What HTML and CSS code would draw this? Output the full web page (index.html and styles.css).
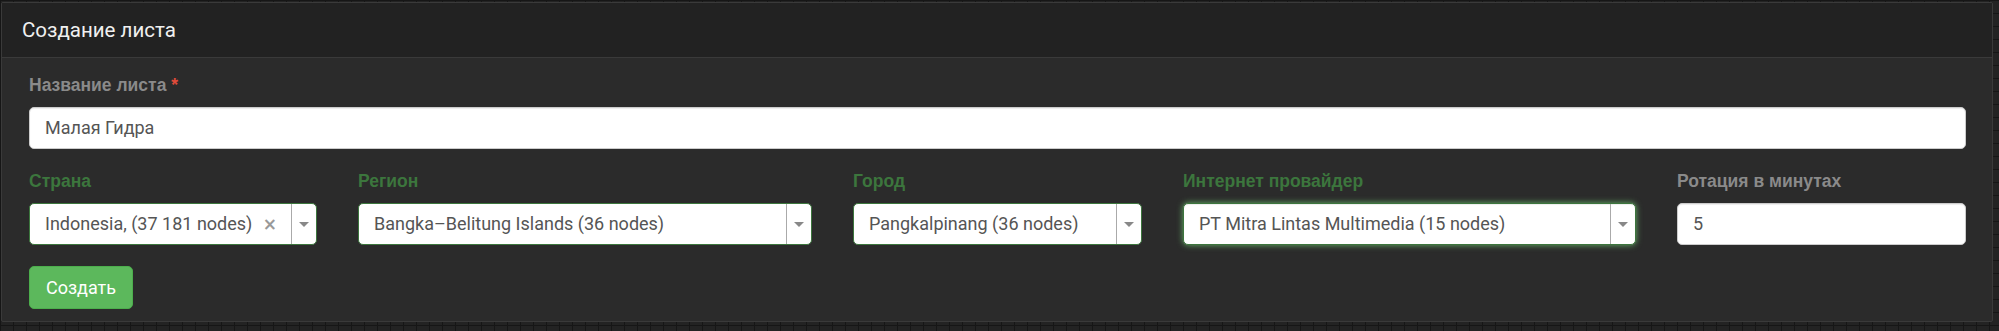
FILE: index.html
```html
<!DOCTYPE html>
<html lang="ru">
<head>
<meta charset="utf-8">
<title>Создание листа</title>
<link rel="stylesheet" href="styles.css">
</head>
<body>
<div class="panel">
  <div class="panel-heading">
    <h3 class="panel-title">Создание листа</h3>
  </div>
  <div class="panel-body">
    <div class="form-group">
      <label class="label">Название листа <span class="req">*</span></label>
      <div class="input">Малая Гидра</div>
    </div>
    <div class="filters">
      <div class="field">
        <label class="label success">Страна</label>
        <div class="select">
          <span class="select-text">Indonesia, (37 181 nodes)</span>
          <span class="clear">×</span>
          <span class="arrow"><span class="caret"></span></span>
        </div>
      </div>
      <div class="field">
        <label class="label success">Регион</label>
        <div class="select">
          <span class="select-text">Bangka–Belitung Islands (36 nodes)</span>
          <span class="arrow"><span class="caret"></span></span>
        </div>
      </div>
      <div class="field">
        <label class="label success">Город</label>
        <div class="select">
          <span class="select-text">Pangkalpinang (36 nodes)</span>
          <span class="arrow"><span class="caret"></span></span>
        </div>
      </div>
      <div class="field">
        <label class="label success">Интернет провайдер</label>
        <div class="select focus">
          <span class="select-text">PT Mitra Lintas Multimedia (15 nodes)</span>
          <span class="arrow"><span class="caret"></span></span>
        </div>
      </div>
      <div class="field">
        <label class="label">Ротация в минутах</label>
        <div class="input">5</div>
      </div>
    </div>
    <button class="btn">Создать</button>
  </div>
</div>
</body>
</html>
```
FILE: styles.css
```css
html, body {
  margin: 0;
  padding: 0;
}
body {
  width: 1999px;
  height: 331px;
  overflow: hidden;
  background-color: #232323;
  background-image:
    linear-gradient(to right, #161616 1px, transparent 1px),
    linear-gradient(to bottom, #161616 1px, transparent 1px);
  background-size: 13px 13px;
  font-family: Roboto, "Liberation Sans", Arial, sans-serif;
  font-size: 18px;
  line-height: 1.42857;
  color: #555;
}
.panel {
  margin: 2px 6px 0 1px;
  height: 320px;
  border: 1px solid #3a3a3a;
  border-radius: 2px;
  background: #2b2b2b;
  box-sizing: border-box;
}
.panel-heading {
  height: 55px;
  box-sizing: border-box;
  background: #222222;
  border-bottom: 1px solid #3a3a3a;
  padding: 0 20px;
  display: flex;
  align-items: center;
}
.panel-title {
  margin: 0;
  font-size: 20.5px;
  font-weight: 400;
  color: #f0f0f0;
  line-height: 1.1;
}
.panel-body {
  padding: 15px 26px 0 27px;
}
.label {
  display: block;
  font-family: "Liberation Sans", Arial, sans-serif;
  font-size: 17.5px;
  font-weight: 700;
  color: #8a8a8a;
  line-height: 25px;
  margin-bottom: 9px;
}
.label.success {
  color: #3c763d;
}
.req {
  color: #e04b3a;
}
.input {
  height: 42px;
  box-sizing: border-box;
  background: #fff;
  border: 1px solid #ccc;
  border-radius: 5px;
  padding: 0 15px;
  display: flex;
  align-items: center;
  color: #555;
  box-shadow: inset 0 1px 1px rgba(0,0,0,.075);
}
.form-group {
  margin-bottom: 20px;
}
.filters {
  display: grid;
  grid-template-columns: 288px 454px 289px 453px 1fr;
  column-gap: 41px;
  margin-bottom: 21px;
}
.select {
  height: 42px;
  box-sizing: border-box;
  background: #fff;
  border: 1px solid #3c763d;
  border-radius: 5px;
  display: flex;
  align-items: center;
  padding-left: 15px;
  color: #555;
}
.select.focus {
  box-shadow: inset 0 1px 1px rgba(0,0,0,.075), 0 0 6px #67b168;
}
.select-text {
  flex: 1;
  white-space: nowrap;
  overflow: hidden;
}
.clear {
  font-family: "DejaVu Sans", sans-serif;
  font-weight: 700;
  font-size: 17px;
  color: #999;
  margin-right: 14px;
}
.arrow {
  width: 24px;
  align-self: stretch;
  border-left: 1px solid #aaa;
  display: flex;
  align-items: center;
  justify-content: center;
}
.caret {
  width: 0;
  height: 0;
  border-left: 5px solid transparent;
  border-right: 5px solid transparent;
  border-top: 5px solid #888;
}
.btn {
  display: block;
  height: 43px;
  width: 104px;
  box-sizing: border-box;
  background: #5cb85c;
  border: 1px solid #4cae4c;
  border-radius: 5px;
  color: #fff;
  font-family: Roboto, "Liberation Sans", Arial, sans-serif;
  font-size: 18px;
  padding: 0;
}
```
